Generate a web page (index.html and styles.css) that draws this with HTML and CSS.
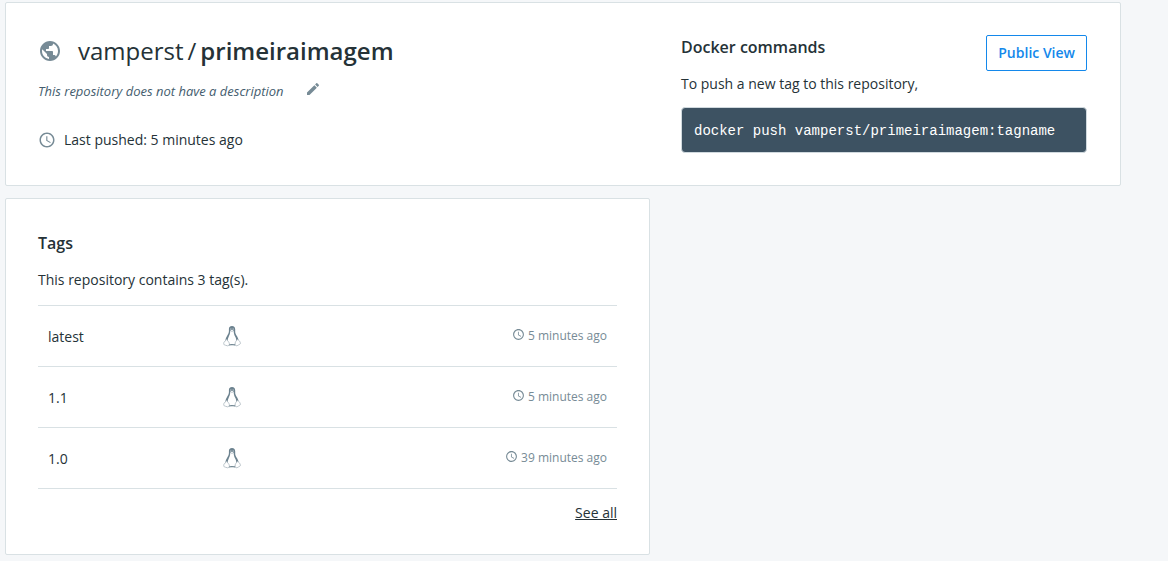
FILE: index.html
```html
<!DOCTYPE html>
<html lang="en">
<head>
<meta charset="utf-8">
<title>vamperst/primeiraimagem</title>
<meta name="viewport" content="width=device-width, initial-scale=1">
<link rel="stylesheet" href="styles.css">
</head>
<body>
<svg class="sprite" aria-hidden="true">
  <symbol id="globe" viewBox="0 0 24 24"><path d="M12 2C6.480 2 2 6.480 2 12s4.480 10 10 10 10-4.480 10-10S17.520 2 12 2zm-1 17.930c-3.950-.49-7-3.850-7-7.930 0-.62.08-1.210.21-1.790L9 15v1c0 1.100.9 2 2 2v1.930zm6.900-2.540c-.26-.81-1-1.390-1.900-1.390h-1v-3c0-.55-.45-1-1-1H8v-2h2c.55 0 1-.45 1-1V7h2c1.100 0 2-.9 2-2v-.41c2.930 1.190 5 4.060 5 7.410 0 2.080-.8 3.970-2.100 5.390z"/></symbol>
  <symbol id="pencil" viewBox="0 0 24 24"><path d="M3 17.250V21h3.750L17.810 9.940l-3.750-3.750L3 17.250zM20.710 7.040c.39-.39.39-1.020 0-1.410l-2.340-2.340c-.39-.39-1.020-.39-1.410 0l-1.830 1.830 3.750 3.750 1.830-1.830z"/></symbol>
  <symbol id="clock" viewBox="0 0 24 24"><path d="M11.990 2C6.470 2 2 6.480 2 12s4.470 10 9.990 10C17.520 22 22 17.520 22 12S17.520 2 11.990 2zM12 20c-4.420 0-8-3.580-8-8s3.580-8 8-8 8 3.580 8 8-3.580 8-8 8zm.5-13H11v6l5.250 3.150.75-1.230-4.500-2.670z"/></symbol>
  <symbol id="linux" viewBox="0 0 20 24">
    <path d="M10 2C7.800 2 6.800 3.500 6.900 5.500c.1 2.200 0 3.500-1.200 5.300C4.300 13 3.300 15 3.300 17.500L6 21.300h8l2.700-3.800c0-2.500-1-4.500-2.500-6.600-1.200-1.800-1-3.100-1-5.400C13.200 3.500 12.200 2 10 2z" fill="#6c828f"/>
    <path d="M8.200 7c.1 2.500-.8 4-1.600 5.900-.8 1.700-1.200 3.300-.9 5.100l1.700 2.500h5.200l1.700-2.500c.2-1.800-.1-3.300-.9-4.900-1-2-1.700-3.500-1.700-6.100-.8-1.300-2.700-1.300-3.500 0z" fill="#fff"/>
    <path d="M8.400 6.900c1 .9 2.200.9 3.200 0" fill="none" stroke="#a9b5bd" stroke-width=".6"/>
    <circle cx="8.900" cy="5" r=".6" fill="#fff"/><circle cx="11.100" cy="5" r=".6" fill="#fff"/>
    <path d="M4.300 15.600c1 .3 1.900 1.700 2.700 3 .9 1.500.2 3.300-1.500 3.200-1.500-.2-2.500-.8-3.400-1.100-.8-.3-.2-1.700-.1-2.500.1-.7.800-.7 1.200-1 .5-.4.300-1.700 1.100-1.600zM15.700 15.600c-1 .3-2 1.700-2.500 3.200-.6 2 .4 3.400 1.900 2.900 1-.3 1.800-1.100 2.900-1.700.8-.4.6-1.100 0-1.900-.4-.6-.3-1.200-.9-1.400-.5-.2-.6-1.300-1.400-1.100z" fill="#fff" stroke="#aab6be" stroke-width=".8"/>
    <path d="M7.300 21c1.700-.7 3.900-.7 5.600 0" fill="none" stroke="#6c828f" stroke-width=".9"/>
  </symbol>
</svg>
<main class="page">
  <section class="card overview">
    <div class="repo">
      <h1 class="title"><svg class="icon globe"><use href="#globe"/></svg><span class="name">vamperst<span class="slash">/</span><strong>primeiraimagem</strong></span></h1>
      <div class="description"><em>This repository does not have a description</em><button class="edit" type="button" aria-label="Edit description"><svg class="icon pencil"><use href="#pencil"/></svg></button></div>
      <p class="pushed"><svg class="icon clock"><use href="#clock"/></svg>Last pushed: 5 minutes ago</p>
    </div>
    <div class="commands">
      <div class="commands-head">
        <div>
          <h2 class="heading">Docker commands</h2>
          <p class="text">To push a new tag to this repository,</p>
        </div>
        <button class="public" type="button">Public View</button>
      </div>
      <pre class="code"><code>docker push vamperst/primeiraimagem:tagname</code></pre>
    </div>
  </section>
  <section class="card tags">
    <h2 class="heading">Tags</h2>
    <p class="text">This repository contains 3 tag(s).</p>
    <table class="table">
      <tbody>
        <tr><td class="tag">latest</td><td class="os"><svg class="linux" role="img" aria-label="Linux"><use href="#linux"/></svg></td><td class="time"><span class="ago"><svg class="icon small"><use href="#clock"/></svg>5 minutes ago</span></td></tr>
        <tr><td class="tag">1.1</td><td class="os"><svg class="linux" role="img" aria-label="Linux"><use href="#linux"/></svg></td><td class="time"><span class="ago"><svg class="icon small"><use href="#clock"/></svg>5 minutes ago</span></td></tr>
        <tr><td class="tag">1.0</td><td class="os"><svg class="linux" role="img" aria-label="Linux"><use href="#linux"/></svg></td><td class="time"><span class="ago"><svg class="icon small"><use href="#clock"/></svg>39 minutes ago</span></td></tr>
      </tbody>
    </table>
    <div class="more"><a href="#all">See all</a></div>
  </section>
</main>
</body>
</html>
```
FILE: styles.css
```css
* { box-sizing: border-box; }
body {
  margin: 0;
  background: #f5f7f9;
  color: #253237;
  font: 14px/20px "Open Sans", "Noto Sans", sans-serif;
}
h1, h2, p, pre { margin: 0; }
svg { display: block; flex: none; }
.sprite { display: none; }
.icon { fill: #778b96; }
.page {
  display: flex;
  flex-direction: column;
  align-items: flex-start;
  gap: 12px;
  padding: 2px 47px 6px 5px;
}
.card {
  background: #fff;
  border: 1px solid #d9e1e4;
  border-radius: 2px;
  padding: 32px;
}
.overview {
  width: 100%;
  display: grid;
  grid-template-columns: 643fr 406fr;
  padding-right: 33px;
}
.title {
  display: flex;
  align-items: center;
  gap: 16px;
  font-size: 24px;
  font-weight: 400;
  line-height: 32px;
}
.title strong { font-weight: 600; }
.slash { margin: 0 4px; }
.globe { width: 24px; height: 24px; }
.description {
  display: flex;
  align-items: center;
  gap: 21px;
  margin-top: 14px;
  font-size: 13px;
  color: #445d6e;
}
.edit { border: 0; background: none; padding: 0 0 4px; }
.pencil { width: 16px; height: 16px; }
.pushed {
  display: flex;
  align-items: center;
  gap: 8px;
  margin-top: 29px;
}
.clock { width: 18px; height: 18px; }
.heading { font-size: 16px; font-weight: 600; line-height: 24px; }
.text { margin-top: 15px; }
.commands-head {
  display: flex;
  justify-content: space-between;
  align-items: flex-start;
}
.public {
  height: 36px;
  padding: 0 11px;
  border: 1px solid #1488eb;
  border-radius: 2px;
  background: #fff;
  color: #1488eb;
  font: 600 14px/20px "Open Sans", "Noto Sans", sans-serif;
}
.code {
  margin-top: 13px;
  padding: 13px 12px 11px;
  border: 1px solid #d0d9de;
  border-radius: 4px;
  background: #3d5262;
  color: #fff;
  font: 14px/20px "Courier New", "Liberation Mono", monospace;
}
.code code { font: inherit; }
.tags { width: 58%; max-width: 645px; padding-bottom: 31px; }
.table {
  width: 100%;
  margin-top: 15px;
  border-collapse: collapse;
  border-top: 1px solid #d9e1e4;
}
.table tr { height: 61px; border-bottom: 1px solid #d9e1e4; }
.table td { padding: 2px 10px 0; }
.tag { width: 30%; }
.table .os, .table .time { padding-top: 0; }
.linux { width: 20px; height: 24px; }
.time { font-size: 12px; color: #778b96; }
.ago { display: flex; align-items: center; justify-content: flex-end; gap: 3px; }
.small { width: 13px; height: 13px; margin-bottom: 4px; }
.more { margin-top: 14px; text-align: right; }
.more a { color: inherit; }
```
